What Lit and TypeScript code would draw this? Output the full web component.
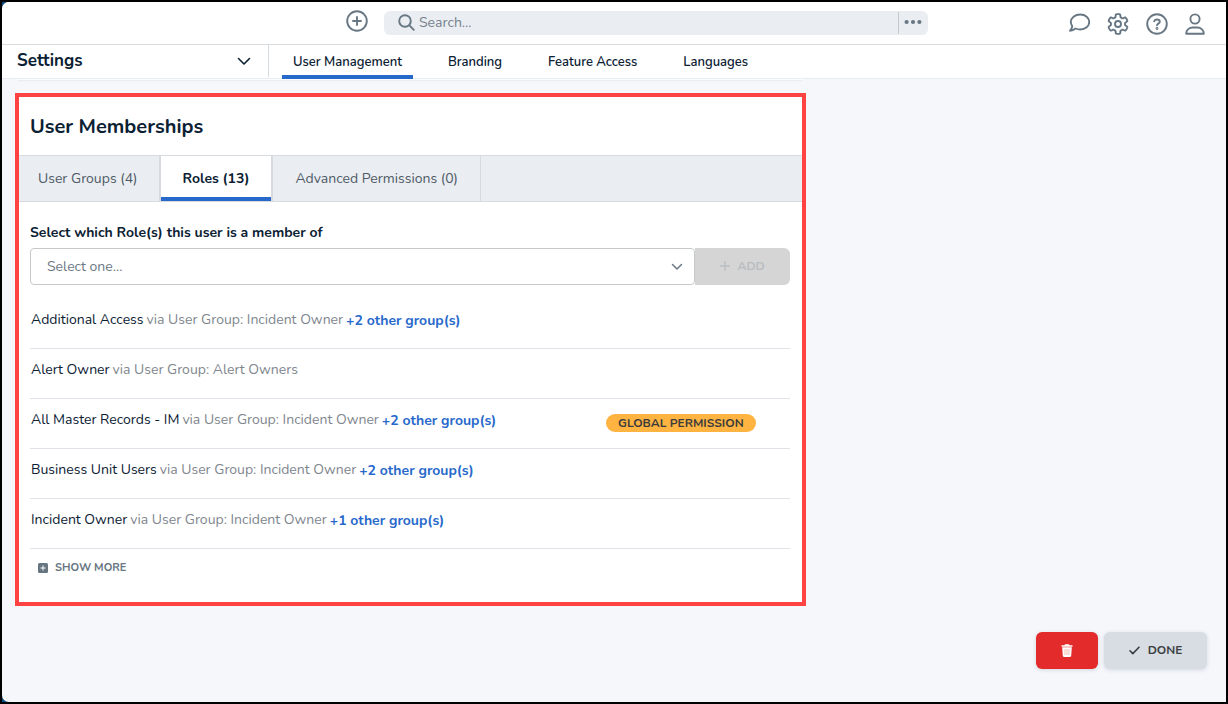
import { LitElement, html, css, svg, nothing } from "lit";
import { customElement, state } from "lit/decorators.js";
import { classMap } from "lit/directives/class-map.js";

interface Role {
  name: string;
  via: string;
  others?: number;
  global?: boolean;
}

const ROLES: Role[] = [
  { name: "Additional Access", via: "Incident Owner", others: 2 },
  { name: "Alert Owner", via: "Alert Owners" },
  { name: "All Master Records - IM", via: "Incident Owner", others: 2, global: true },
  { name: "Business Unit Users", via: "Incident Owner", others: 2 },
  { name: "Incident Owner", via: "Incident Owner", others: 1 },
];

const gearPoints = () => {
  const pts: string[] = [];
  for (let i = 0; i <= 144; i++) {
    const a = (i / 144) * Math.PI * 2;
    const w = Math.max(-1, Math.min(1, Math.cos(6 * a) * 2.2 + 0.3));
    const r = 8.5 + w * 1.4;
    pts.push(`${(11 + r * Math.sin(a)).toFixed(2)},${(11 - r * Math.cos(a)).toFixed(2)}`);
  }
  return pts.join(" ");
};

const icon = (w: number, h: number, body: unknown, stroke = 1.9) => html`
  <svg class="icon" width=${w} height=${h} viewBox="0 0 ${w} ${h}" fill="none" stroke="currentColor"
    stroke-width=${stroke} stroke-linecap="round" stroke-linejoin="round" aria-hidden="true">${body}</svg>`;

@customElement("app-header")
export class AppHeader extends LitElement {
  static styles = css`
    :host { display: block; }
    * { box-sizing: border-box; }
    .bar {
      display: grid;
      grid-template-columns: 344fr 582fr 298fr;
      height: 42px;
      background: #fff;
      color: #687784;
    }
    .middle { grid-column: 2; display: flex; align-items: center; gap: 16px; padding-bottom: 1px; }
    .btn { border: 0; background: none; padding: 0; color: inherit; display: flex; cursor: pointer; }
    .create { padding-bottom: 3px; }
    .search {
      flex: 1; display: flex; align-items: center; height: 24px;
      background: #eaedf2; border-radius: 6px; padding-left: 14px;
    }
    .field {
      flex: 1; min-width: 0; border: 0; background: none; outline: 0; padding: 0 0 0 4px;
      font: 14px/20px Nunito, Lato, sans-serif; color: #0b2133;
    }
    .field::placeholder { color: #75818c; opacity: 1; }
    .more {
      height: 22px; width: 30px; border-left: 1px solid #c6c9cc;
      align-items: center; justify-content: center; padding: 0 2px 2px 0;
    }
    .tools { display: flex; align-items: center; justify-content: flex-end; gap: 17px; padding: 2px 21px 0 0; }
    .icon { display: block; }
  `;

  render() {
    return html`
      <header class="bar">
        <div class="middle">
          <button class="btn create" aria-label="Create">
            ${icon(22, 22, svg`<circle cx="11" cy="11" r="9.8"/><path d="M11 7v8M7 11h8"/>`)}
          </button>
          <div class="search" role="search">
            ${icon(17, 17, svg`<circle cx="7" cy="7" r="5.8"/><path d="M11.4 11.4l4.4 4.4"/>`)}
            <input class="field" type="text" placeholder="Search..." aria-label="Search" />
            <button class="btn more" aria-label="Search options">
              <svg class="icon" width="18" height="6" viewBox="0 0 18 6" fill="currentColor" aria-hidden="true">
                <circle cx="2.6" cy="3" r="2.1"/><circle cx="9" cy="3" r="2.1"/><circle cx="15.4" cy="3" r="2.1"/>
              </svg>
            </button>
          </div>
        </div>
        <nav class="tools" aria-label="Tools">
          <button class="btn" aria-label="Messages">
            ${icon(22, 22, svg`<path d="M12.200 1.500c5.200 0 9 3.300 9 7.500s-3.800 7.500-9 7.500c-1.700 0-3.300-.300-4.700-1-1.500 1.300-3.400 2.200-5.500 2.200 1.300-1.300 2.100-2.900 2.300-4.500C3.400 12 2.800 10.500 2.800 9c0-4.200 4.200-7.500 9.400-7.500z"/>`)}
          </button>
          <button class="btn" aria-label="Settings">
            ${icon(22, 22, svg`<polygon points=${gearPoints()}/><circle cx="11" cy="11" r="3"/>`)}
          </button>
          <button class="btn" aria-label="Help">
            ${icon(22, 22, svg`<circle cx="11" cy="11" r="9.800"/><path d="M8.200 8.300c.4-1.200 1.400-1.800 2.800-1.800 1.600 0 2.800.8 2.800 2.200 0 1.900-2.800 1.900-2.800 3.600"/><circle cx="11" cy="15.500" r=".5"/>`)}
          </button>
          <button class="btn" aria-label="Profile">
            ${icon(20, 22, svg`<circle cx="10" cy="6" r="4.600"/><path d="M1.200 20.700c0-4 3.200-6.200 6.500-6.200h4.600c3.300 0 6.500 2.200 6.500 6.200z"/>`)}
          </button>
        </nav>
      </header>`;
  }
}

@customElement("section-nav")
export class SectionNav extends LitElement {
  static styles = css`
    :host { display: block; }
    * { box-sizing: border-box; }
    .nav {
      display: flex; background: #fff; height: 35px;
      border-top: 1px solid #d9dcdf; border-bottom: 1px solid #e9edf1;
      font-family: Nunito, Lato, sans-serif; color: #0b2133;
    }
    .section {
      display: flex; align-items: center; justify-content: space-between;
      width: 267px; height: 32px; padding: 0 17px 0 15px;
      border: 0; border-right: 1px solid #d5dade; background: none;
      font: 700 17px/24px Nunito, Lato, sans-serif; color: inherit; cursor: pointer;
    }
    .links { display: flex; gap: 24px; margin-left: 13px; }
    .link {
      display: flex; align-items: center; padding: 4px 11px 0; height: 34px;
      border-bottom: 4px solid transparent;
      font-size: 13px; line-height: 18px; font-weight: 600; color: inherit; text-decoration: none;
    }
    .current { border-color: #2769cb; }
  `;

  render() {
    const tabs = ["User Management", "Branding", "Feature Access", "Languages"];
    return html`
      <nav class="nav" aria-label="Settings">
        <button class="section">Settings
          ${icon(14, 9, svg`<path d="M1.500 1.500L7 7l5.500-5.500"/>`, 1.6)}
        </button>
        <div class="links">
          ${tabs.map((t, i) => html`<a class=${classMap({ link: true, current: i === 0 })} href="#">${t}</a>`)}
        </div>
      </nav>`;
  }
}

@customElement("role-row")
export class RoleRow extends LitElement {
  static properties = { entry: { attribute: false } };
  declare entry: Role;

  static styles = css`
    :host { display: block; border-bottom: 1px solid #dfe2e6; }
    .row {
      display: flex; align-items: flex-start; height: 49px; padding: 0 34px 0 1px; box-sizing: border-box;
      font: 14px/20px Nunito, Lato, sans-serif; color: #0b2133;
    }
    .text { flex: 1; display: flex; gap: 3px; padding-top: 11px; white-space: nowrap; }
    .via { color: #80868e; }
    .others { padding-top: 1px; color: #2769cb; font-weight: 700; text-decoration: none; }
    .badge {
      margin-top: 15px; padding: 0 12px; border-radius: 9px; background: #ffb340;
      font-size: 12px; line-height: 18px; font-weight: 700; color: #3c3c3c;
    }
  `;

  render() {
    const r = this.entry;
    return html`
      <div class="row">
        <div class="text">
          <span>${r.name}</span>
          <span class="via">via User Group: ${r.via}</span>
          ${r.others ? html`<a class="others" href="#">+${r.others} other group(s)</a>` : nothing}
        </div>
        ${r.global ? html`<span class="badge">GLOBAL PERMISSION</span>` : nothing}
      </div>`;
  }
}

@customElement("membership-card")
export class MembershipCard extends LitElement {
  static styles = css`
    :host { display: block; }
    * { box-sizing: border-box; }
    .card {
      border: 4px solid #ff4242; background: #fff; color: #0b2133;
      font: 14px/20px Nunito, Lato, sans-serif;
    }
    .title { margin: 0; padding: 15px 11px 14px; font-size: 20px; line-height: 29px; font-weight: 700; }
    .tabs { display: flex; height: 47px; background: #eaedf2; border: solid #d7dbe0; border-width: 1px 0; }
    .tab {
      border: 0; border-right: 1px solid #d7dbe0; background: none; padding: 0 22px;
      font: inherit; color: #4e5a65; cursor: pointer;
    }
    .tab:first-child { padding: 0 21px 0 19px; }
    .active {
      background: #fff; color: #0b2133; font-weight: 700; border-left: 1px solid #d7dbe0;
      border-right-width: 2px; box-shadow: inset 0 -4px #2769cb;
    }
    .body { padding: 21px 12px 25px 11px; }
    .label { display: block; font-weight: 700; margin-bottom: 5px; }
    .picker { display: flex; margin-bottom: 14px; }
    .combo { flex: 1; display: grid; align-items: center; }
    .select {
      grid-area: 1 / 1; appearance: none; width: 100%; height: 37px; padding: 0 40px 0 16px;
      border: 1px solid #c6c9cc; border-radius: 4px; background: #fff; font: inherit; color: #6c7883;
    }
    .chevron { grid-area: 1 / 1; justify-self: end; margin-right: 12px; pointer-events: none; color: #6c7883; display: flex; }
    .add {
      display: flex; align-items: center; justify-content: center; gap: 8px; width: 95px; padding-bottom: 3px;
      border: 0; border-radius: 0 6px 6px 0; background: #d5d5d5; color: #b9bec2;
      font: 700 12px/18px Nunito, Lato, sans-serif;
    }
    .more {
      display: flex; align-items: center; gap: 7px; border: 0; background: none; padding: 10px 0 0 8px;
      font: 700 11px/18px Nunito, Lato, sans-serif; color: #66757f; cursor: pointer;
    }
  `;

  @state() private tab = 1;

  render() {
    const tabs = ["User Groups (4)", "Roles (13)", "Advanced Permissions (0)"];
    return html`
      <section class="card">
        <h2 class="title">User Memberships</h2>
        <div class="tabs" role="tablist">
          ${tabs.map((t, i) => html`
            <button class=${classMap({ tab: true, active: i === this.tab })} role="tab"
              aria-selected=${i === this.tab} @click=${() => (this.tab = i)}>${t}</button>`)}
        </div>
        <div class="body">
          <label class="label" for="role">Select which Role(s) this user is a member of</label>
          <div class="picker">
            <div class="combo">
              <select class="select" id="role"><option>Select one...</option></select>
              <span class="chevron">${icon(12, 8, svg`<path d="M1.500 1.500L6 6l4.500-4.500"/>`, 1.5)}</span>
            </div>
            <button class="add" disabled>
              ${icon(10, 10, svg`<path d="M5 .5v9M.5 5h9"/>`, 1.3)}ADD
            </button>
          </div>
          ${ROLES.map((r) => html`<role-row .entry=${r}></role-row>`)}
          <button class="more">
            <svg width="10" height="10" viewBox="0 0 10 10" aria-hidden="true">
              <rect width="10" height="10" rx="1.500" fill="#66757f"/>
              <path d="M5 2.500v5M2.500 5h5" stroke="#fff" stroke-width="1"/>
            </svg>SHOW MORE
          </button>
        </div>
      </section>`;
  }
}

@customElement("app-root")
export class AppRoot extends LitElement {
  static styles = css`
    :host { display: block; }
    * { box-sizing: border-box; }
    .frame { min-height: 100vh; border: 2px solid #000; background: #0d4b7c; display: flex; }
    .shell { flex: 1; min-width: 0; background: #f5f7fb; border-radius: 7px 0 0 7px; overflow: hidden; }
    .page { display: grid; grid-template-columns: 2fr 1fr; gap: 0 12px; padding: 0 13px; }
    .previous {
      height: 1px; margin: 0 3px 13px; background: #fbfcfd;
      border-radius: 0 0 6px 6px; box-shadow: 0 1px 1px #e6eaee;
    }
    .actions { display: flex; justify-content: flex-end; gap: 6px; padding: 26px 19px 33px; }
    .action {
      display: flex; align-items: center; justify-content: center; gap: 8px; height: 37px; padding-bottom: 2px;
      border: 0; border-radius: 6px; box-shadow: 0 1px 4px rgba(30, 50, 70, 0.16); cursor: pointer;
      font: 700 12px/18px Nunito, Lato, sans-serif;
    }
    .delete { width: 62px; background: #e32b2b; color: #fff; }
    .done { width: 103px; background: #d8dde4; color: #3c3f42; }
  `;

  render() {
    return html`
      <div class="frame">
        <div class="shell">
          <app-header></app-header>
          <section-nav></section-nav>
          <main class="page">
            <div>
              <div class="previous"></div>
              <membership-card></membership-card>
            </div>
          </main>
          <div class="actions">
            <button class="action delete" aria-label="Delete">
              <svg width="12" height="13" viewBox="0 0 12 13" fill="currentColor" aria-hidden="true">
                <path d="M.5 1.200h3L4 .300h4l.5.900h3v1.500H.5z"/>
                <path d="M1.200 3.300h9.600l-.6 8.500c0 .7-.500 1.200-1.200 1.200H3c-.7 0-1.200-.5-1.200-1.200z"/>
                <path d="M4 5v6M6 5v6M8 5v6" stroke="#f0a9a0" stroke-width=".8"/>
              </svg>
            </button>
            <button class="action done">
              ${icon(11, 9, svg`<path d="M1 4.800L3.800 7.600 10 1.200"/>`, 1.6)}DONE
            </button>
          </div>
        </div>
      </div>`;
  }
}
